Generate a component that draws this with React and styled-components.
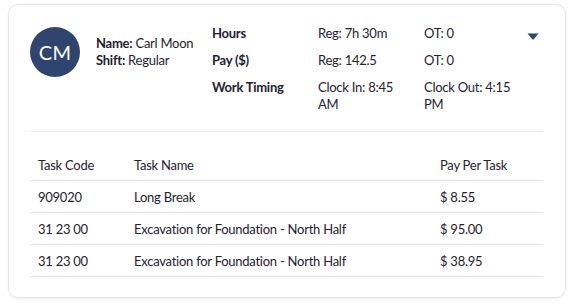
import React from "react"
import styled, { createGlobalStyle } from "styled-components"

const GlobalStyle = createGlobalStyle`
  body {
    margin: 0;
    background: #ffffff;
    font-family: Lato, "Open Sans", sans-serif;
    color: #1f2230;
  }
`

const Page = styled.div`
  padding: 4px 8px 6px 8px;
`

const Card = styled.div`
  border: 1px solid #e4e7ef;
  border-radius: 10px;
  box-shadow: 0 1px 3px rgba(30, 40, 70, 0.08);
  padding: 20px 22px 20px 21px;
  background: #fff;
  letter-spacing: -0.25px;
`

const Header = styled.div`
  display: flex;
  align-items: flex-start;
  padding-bottom: 18px;
  border-bottom: 1px solid #e8eaf0;
`

const Person = styled.div`
  display: flex;
  align-items: center;
  gap: 16px;
  width: 182px;
  margin-top: 2px;
`

const Avatar = styled.div`
  width: 50px;
  height: 50px;
  border-radius: 50%;
  background: #2f4570;
  color: #fff;
  display: flex;
  align-items: center;
  justify-content: center;
  font-size: 20px;
  letter-spacing: 0.3px;
`

const PersonInfo = styled.div`
  font-size: 13px;
  line-height: 17px;
`

const Label = styled.span`
  font-weight: 700;
`

const Stats = styled.div`
  display: grid;
  grid-template-columns: 106px 106px 100px;
  row-gap: 10px;
  font-size: 13px;
  line-height: 17px;
  flex: 1;
`

const StatCell = styled.div`
  padding-right: ${p => (p.$last ? 0 : 16)}px;
  font-weight: ${p => (p.$label ? 700 : 400)};
`

const Caret = styled.div`
  width: 12px;
  margin-top: 8px;
  margin-left: auto;
  margin-right: 4px;
  svg {
    display: block;
  }
`

const Table = styled.table`
  width: 100%;
  table-layout: fixed;
  border-collapse: collapse;
  margin-top: 18px;
  font-size: 13px;
`

const Col = styled.col`
  width: ${p => p.$w};
`

const Th = styled.th`
  text-align: left;
  font-weight: 400;
  height: 30px;
  padding: 0 8px;
  border-bottom: 1px solid #e2e5ec;
`

const Td = styled.td`
  height: 31px;
  padding: 0 8px;
  border-bottom: 1px solid #e2e5ec;
`

const tasks = [
  { code: "909020", name: "Long Break", pay: "$ 8.55" },
  { code: "31 23 00", name: "Excavation for Foundation - North Half", pay: "$ 95.00" },
  { code: "31 23 00", name: "Excavation for Foundation - North Half", pay: "$ 38.95" },
]

export default function App() {
  return (
    <Page>
      <GlobalStyle />
      <Card>
        <Header>
          <Person>
            <Avatar>CM</Avatar>
            <PersonInfo>
              <div><Label>Name:</Label> Carl Moon</div>
              <div><Label>Shift:</Label> Regular</div>
            </PersonInfo>
          </Person>
          <Stats>
            <StatCell $label>Hours</StatCell>
            <StatCell>Reg: 7h 30m</StatCell>
            <StatCell $last>OT: 0</StatCell>
            <StatCell $label>Pay ($)</StatCell>
            <StatCell>Reg: 142.5</StatCell>
            <StatCell $last>OT: 0</StatCell>
            <StatCell $label>Work Timing</StatCell>
            <StatCell>Clock In: 8:45 AM</StatCell>
            <StatCell $last>Clock Out: 4:15 PM</StatCell>
          </Stats>
          <Caret>
            <svg width="12" height="7" viewBox="0 0 12 7">
              <path d="M0.5 0.5 H11.5 L6.8 6.2 Q6 7 5.2 6.2 Z" fill="#2f4570" />
            </svg>
          </Caret>
        </Header>
        <Table>
          <colgroup>
            <Col $w="96px" />
            <Col $w="306px" />
            <Col $w="111px" />
          </colgroup>
          <thead>
            <tr>
              <Th>Task Code</Th>
              <Th>Task Name</Th>
              <Th>Pay Per Task</Th>
            </tr>
          </thead>
          <tbody>
            {tasks.map((t, i) => (
              <tr key={i}>
                <Td>{t.code}</Td>
                <Td>{t.name}</Td>
                <Td>{t.pay}</Td>
              </tr>
            ))}
          </tbody>
        </Table>
      </Card>
    </Page>
  )
}
